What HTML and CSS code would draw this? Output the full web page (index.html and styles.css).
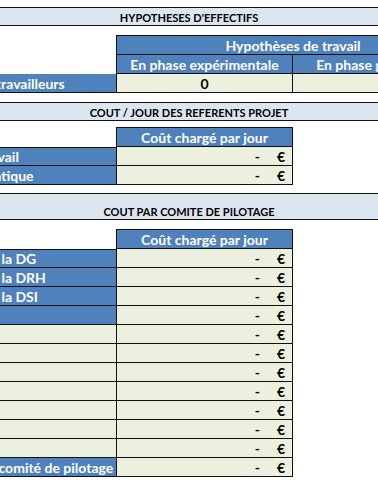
FILE: index.html
```html
<!DOCTYPE html>
<html lang="fr">
<head>
    <meta charset="UTF-8">
    <meta name="viewport" content="width=device-width, initial-scale=1.0">
    <title>Hypothèses et coûts</title>
    <link rel="stylesheet" href="styles.css">
</head>
<body>
    <div class="sheet">
        <!-- Hypothèses d'effectifs -->
        <div class="band band-first">HYPOTHESES D'EFFECTIFS</div>
        <div class="grid grid-3">
            <div class="cell blank"></div>
            <div class="cell head span-2">Hypothèses de travail</div>

            <div class="cell blank"></div>
            <div class="cell head val">En phase expérimentale</div>
            <div class="cell head last">En phase généralisée</div>

            <div class="cell label">Nombre réel de travailleurs</div>
            <div class="cell input val center">0</div>
            <div class="cell input last"></div>
        </div>

        <!-- Coût des référents -->
        <div class="band">COUT / JOUR DES REFERENTS PROJET</div>
        <div class="grid grid-2">
            <div class="cell blank"></div>
            <div class="cell head val">Coût chargé par jour</div>

            <div class="cell label">Médecine du travail</div>
            <div class="cell input val money"><span>-</span><span>€</span></div>

            <div class="cell label">Référent informatique</div>
            <div class="cell input val money"><span>-</span><span>€</span></div>
        </div>

        <!-- Coût par comité -->
        <div class="band band-tall">COUT PAR COMITE DE PILOTAGE</div>
        <div class="grid grid-2 grid-long">
            <div class="cell blank"></div>
            <div class="cell head val">Coût chargé par jour</div>

            <div class="cell label">Représentant de la DG</div>
            <div class="cell input val money"><span>-</span><span>€</span></div>
            <div class="cell label">Représentant de la DRH</div>
            <div class="cell input val money"><span>-</span><span>€</span></div>
            <div class="cell label">Représentant de la DSI</div>
            <div class="cell input val money"><span>-</span><span>€</span></div>
            <div class="cell label"></div>
            <div class="cell input val money"><span>-</span><span>€</span></div>

            <div class="cell input"></div>
            <div class="cell input val money"><span>-</span><span>€</span></div>
            <div class="cell input"></div>
            <div class="cell input val money"><span>-</span><span>€</span></div>
            <div class="cell input"></div>
            <div class="cell input val money"><span>-</span><span>€</span></div>
            <div class="cell input"></div>
            <div class="cell input val money"><span>-</span><span>€</span></div>
            <div class="cell input"></div>
            <div class="cell input val money"><span>-</span><span>€</span></div>
            <div class="cell input"></div>
            <div class="cell input val money"><span>-</span><span>€</span></div>
            <div class="cell input"></div>
            <div class="cell input val money"><span>-</span><span>€</span></div>

            <div class="cell label">Coût moyen par comité de pilotage</div>
            <div class="cell input val money"><span>-</span><span>€</span></div>
        </div>
    </div>
</body>
</html>
```

FILE: styles.css
```css
html, body {
    margin: 0;
    padding: 0;
    background-color: #ffffff;
    overflow: hidden;
}

.sheet {
    width: 378px;
    overflow: hidden;
    padding-top: 7px;
    font-family: Lato, 'Liberation Sans', sans-serif;
    font-weight: bold;
    color: #000;
}

/* bandeaux de titre */
.band {
    box-sizing: border-box;
    height: 19px;
    margin-top: 9px;
    display: flex;
    align-items: flex-end;
    justify-content: center;
    padding-bottom: 1px;
    background-color: #dce6f1;
    border-top: 1px solid #111;
    border-bottom: 1px solid #111;
    font-size: 11px;
    line-height: 13px;
    white-space: nowrap;
}

.band-first {
    margin-top: 0;
}

.band-tall {
    height: 27px;
    margin-top: 8px;
}

/* grilles */
.grid {
    display: grid;
    grid-template-columns: 222px 177px 176px;
    grid-template-rows: 20px;
    grid-auto-rows: 19px;
    margin-left: -106px;
    margin-top: 9px;
    font-size: 14px;
}

.grid-2 {
    grid-template-columns: 222px 177px;
    margin-top: 6px;
}

.grid-long {
    margin-top: 9px;
}

.cell {
    box-sizing: border-box;
    display: flex;
    align-items: center;
    white-space: nowrap;
    overflow: hidden;
    border-bottom: 1px solid #111;
}

.grid > .cell:nth-child(-n+3) {
    border-top: 1px solid #111;
}

.blank {
    border: none !important;
}

.head {
    justify-content: center;
    background-color: #4f81bd;
    color: #fff;
    border-left: 1px solid #111;
}

.span-2 {
    grid-column: span 2;
}

.label {
    padding-left: 2px;
    background-color: #4f81bd;
    color: #fff;
}

.input {
    background-color: #ebf1de;
}

.val {
    border-left: 1px solid #111;
    border-right: 1px solid #111;
}

.last {
    border-left: none;
}

.center {
    justify-content: center;
}

.money {
    justify-content: flex-end;
    gap: 17px;
    padding-right: 7px;
}
```
